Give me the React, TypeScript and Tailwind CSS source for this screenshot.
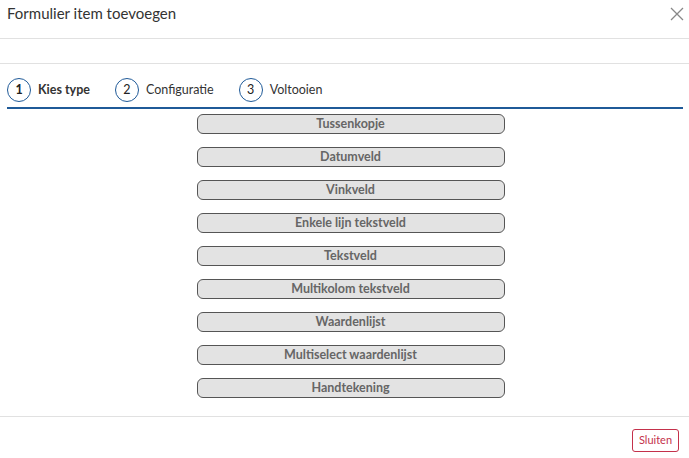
import React from "react";

const items = [
  "Tussenkopje",
  "Datumveld",
  "Vinkveld",
  "Enkele lijn tekstveld",
  "Tekstveld",
  "Multikolom tekstveld",
  "Waardenlijst",
  "Multiselect waardenlijst",
  "Handtekening",
];

function Step({ n, label, active }: { n: number; label: string; active?: boolean }) {
  return (
    <div className="flex items-center">
      <div
        className={`w-[24px] h-[24px] rounded-full border-[1.5px] border-[#1f5a98] flex items-center justify-center text-[12.5px] text-[#222] ${
          active ? "font-bold" : ""
        }`}
      >
        {n}
      </div>
      <span className={`ml-[7px] text-[12.5px] text-[#333] ${active ? "font-bold" : ""}`}>{label}</span>
    </div>
  );
}

export default function App() {
  return (
    <div
      className="w-[689px] h-[458px] bg-white overflow-hidden flex flex-col"
      style={{ fontFamily: 'Lato, "Noto Sans", sans-serif' }}
    >
      <div className="h-[39px] border-b border-[#e1e1e1] flex items-start justify-between pl-[7px] pr-[5px]">
        <span className="text-[15px] text-[#333] mt-[2px]">Formulier item toevoegen</span>
        <svg width="14" height="14" viewBox="0 0 14 14" className="mt-[7px]">
          <path d="M1 1L13 13M13 1L1 13" stroke="#888" strokeWidth="1.3" />
        </svg>
      </div>
      <div className="h-[25px] border-b border-[#e1e1e1]" />
      <div className="px-[7px] pt-[14px]">
        <div className="flex items-center gap-[25px] h-[24px]">
          <Step n={1} label="Kies type" active />
          <Step n={2} label="Configuratie" />
          <Step n={3} label="Voltooien" />
        </div>
        <div className="mt-[5px] h-[2px] bg-[#1f5a98] mr-[-1px]" />
      </div>
      <div className="flex flex-col items-center gap-[13px] pt-[5px] pl-[12px]">
        {items.map((t) => (
          <button
            key={t}
            className="w-[308px] h-[20px] rounded-[6px] border border-[#555] bg-[#e3e3e3] text-[12.5px] font-bold text-[#666] flex items-center justify-center"
          >
            {t}
          </button>
        ))}
      </div>
      <div className="mt-[18px] border-t border-[#e1e1e1] flex justify-end pr-[10px] pt-[12px]">
        <button className="w-[47px] h-[23px] rounded-[3px] border border-[#c4314b] text-[#c4314b] text-[11px] flex items-center justify-center">
          Sluiten
        </button>
      </div>
    </div>
  );
}
